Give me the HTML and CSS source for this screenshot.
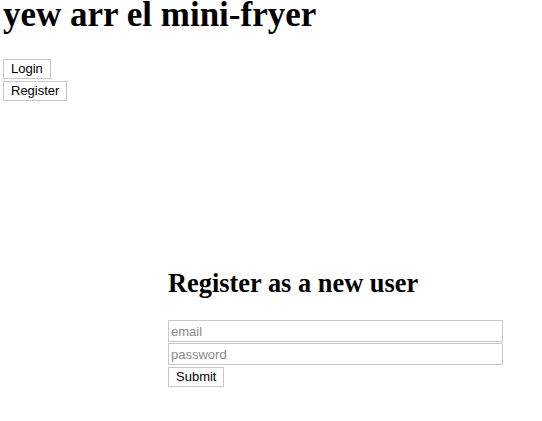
FILE: index.html
```html
<!DOCTYPE html>
<html>
<head>
<meta charset="utf-8">
<title>yew arr el mini-fryer</title>
<link rel="stylesheet" href="styles.css">
</head>
<body>
<div class="page">
  <h1 class="title">yew arr el mini-fryer</h1>
  <nav class="nav">
    <button class="btn">Login</button>
    <button class="btn">Register</button>
  </nav>
  <section class="register">
    <h2 class="register-title">Register as a new user</h2>
    <form class="form">
      <input class="field" type="email" placeholder="email">
      <input class="field" type="password" placeholder="password">
      <button class="btn" type="button">Submit</button>
    </form>
  </section>
</div>
</body>
</html>
```
FILE: styles.css
```css
html, body {
  margin: 0;
  padding: 0;
  background: #ffffff;
}
.page {
  padding: 0 3px;
  font-family: "Liberation Serif", "Times New Roman", serif;
  color: #000;
}
.title {
  margin: 0;
  font-size: 35px;
  line-height: 30px;
  font-weight: bold;
}
.nav {
  margin-top: 29px;
  display: flex;
  flex-direction: column;
  align-items: flex-start;
  gap: 2px;
}
.btn {
  font-family: "Liberation Sans", Arial, sans-serif;
  font-size: 13px;
  line-height: 16px;
  height: 20px;
  padding: 1px 7px;
  margin: 0;
  background: #ffffff;
  color: #000;
  border: 1px solid #c8c8c8;
  border-radius: 0;
  box-sizing: border-box;
}
.register {
  margin-top: 167px;
  margin-left: 165px;
  width: 335px;
}
.register-title {
  margin: 0 0 22px 0;
  font-size: 26.4px;
  line-height: 30px;
  font-weight: bold;
}
.form {
  display: flex;
  flex-direction: column;
  align-items: flex-start;
  gap: 1px;
}
.field {
  width: 335px;
  height: 22px;
  box-sizing: border-box;
  margin: 0;
  padding: 0 2px;
  border: 1px solid #c8c8c8;
  border-radius: 0;
  font-family: "Liberation Sans", Arial, sans-serif;
  font-size: 13px;
  color: #000;
  background: #fff;
}
.field::placeholder {
  color: #8a8a8a;
}
.form .btn {
  margin-top: 1px;
}
```
